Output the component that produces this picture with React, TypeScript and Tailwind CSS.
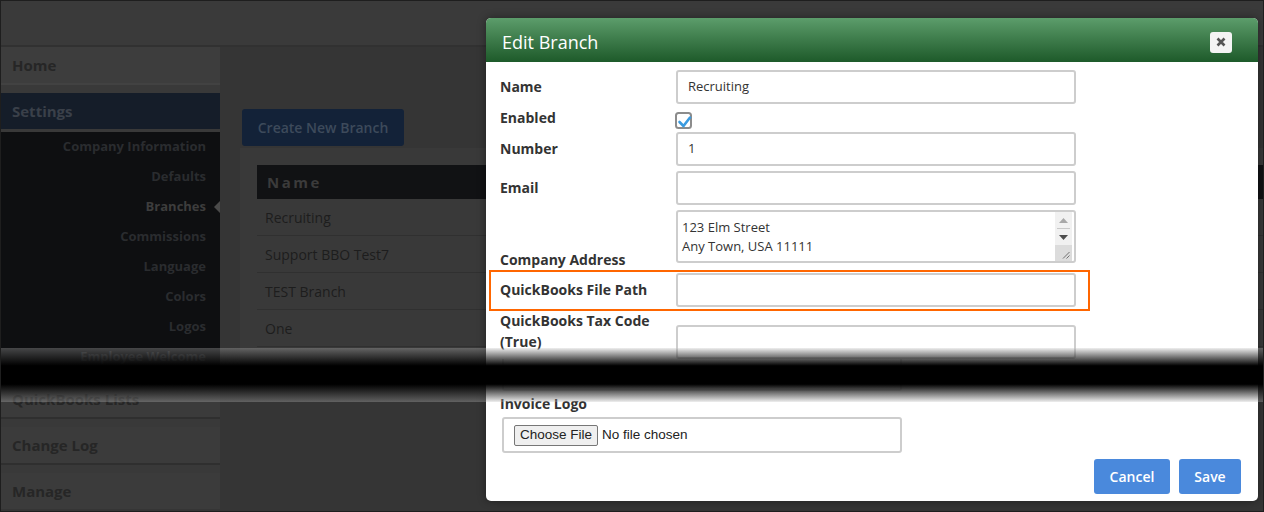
import React from 'react';

const subItems = [
  'Company Information',
  'Defaults',
  'Branches',
  'Commissions',
  'Language',
  'Colors',
  'Logos',
  'Employee Welcome',
];

const branches = ['Recruiting', 'Support BBO Test7', 'TEST Branch', 'One'];

function Sidebar() {
  return (
    <div className="w-[219px] shrink-0 bg-[#393939] flex flex-col">
      <div className="h-[36px] flex items-center pl-[11px] bg-[#3d3d3d] text-[15px] font-bold text-[#262626]">Home</div>
      <div className="h-[10px] border-t-2 border-[#424242]" />
      <div className="h-[36px] flex items-center pl-[11px] bg-[#151d29] text-[15px] font-bold text-[#3a4049]">Settings</div>
      <div className="mt-[3px] bg-[#0e0f11] pb-[9px]">
        {subItems.map((item) => (
          <div key={item} className="h-[30px] flex items-center justify-end">
            <span
              className={`text-[13px] font-bold ${item === 'Branches' ? 'text-[#3d3d3d]' : 'text-[#2a2c2f]'}`}
            >
              {item}
            </span>
            <span className="w-[14px] flex justify-end">
              {item === 'Branches' && (
                <span className="w-0 h-0 border-y-[6px] border-y-transparent border-r-[6px] border-r-[#4a4a4a]" />
              )}
            </span>
          </div>
        ))}
      </div>
      {['QuickBooks Lists', 'Change Log', 'Manage'].map((item, i) => (
        <div key={item}>
          {i > 0 && <div className="h-[10px] border-t-2 border-[#2f2f2f]" />}
          <div className="h-[36px] flex items-center pl-[11px] bg-[#3b3b3b] text-[15px] font-bold text-[#262626]">
            {item}
          </div>
        </div>
      ))}
    </div>
  );
}

function MainArea() {
  return (
    <div className="flex-1 bg-[#353535] pl-[22px] pt-[62px]">
      <button className="h-[37px] w-[162px] rounded-[3px] bg-[#132238] text-[14px] font-semibold text-[#3d4a5b]">
        Create New Branch
      </button>
      <div className="mt-[2px] -ml-[2px] h-[217px] bg-[#393939] pl-[17px] pt-[17px]">
        <div className="h-[34px] bg-[#111214] flex items-center pl-[10px] text-[15px] font-bold tracking-[2.5px] text-[#3b3b3b]">
          Name
        </div>
        {branches.map((b) => (
          <div key={b} className="h-[37px] flex items-center pl-[8px] border-b border-[#303030] text-[14px] text-[#1d1d1d]">
            {b}
          </div>
        ))}
      </div>
    </div>
  );
}

function TextInput({ value = '' }: { value?: string }) {
  return (
    <div className="w-[400px] h-[34px] border-2 border-[#cdcdcd] rounded-[3px] flex items-center pl-[10px] text-[13px] text-[#333]">
      {value}
    </div>
  );
}

function Label({ children, className = '' }: { children: React.ReactNode; className?: string }) {
  return <div className={`w-[176px] shrink-0 text-[14px] font-bold text-[#333] leading-[20px] ${className}`}>{children}</div>;
}

function AddressBox() {
  return (
    <div className="w-[400px] h-[53px] border-2 border-[#cdcdcd] rounded-[3px] flex">
      <div className="flex-1 pl-[4px] pt-[6px] text-[13px] leading-[19px] text-[#333]">
        <div>123 Elm Street</div>
        <div>Any Town, USA 11111</div>
      </div>
      <div className="w-[17px] mr-[2px] bg-[#f1f1f1] flex flex-col">
        <div className="h-[16px] flex items-center justify-center">
          <svg width="9" height="5" viewBox="0 0 9 5">
            <path d="M0 5 L4.5 0 L9 5 Z" fill="#a8a8a8" />
          </svg>
        </div>
        <div className="h-px mx-[2px] bg-[#c8c8c8]" />
        <div className="h-[16px] flex items-center justify-center">
          <svg width="9" height="5" viewBox="0 0 9 5">
            <path d="M0 0 L9 0 L4.5 5 Z" fill="#4d4d4d" />
          </svg>
        </div>
        <div className="flex-1 bg-[#dcdcdc] flex items-end justify-end pr-[2px] pb-[2px]">
          <svg width="8" height="8" viewBox="0 0 8 8">
            <path d="M1 7.5 L7.5 1 M4.5 7.5 L7.5 4.5" stroke="#707070" strokeWidth="1" />
          </svg>
        </div>
      </div>
    </div>
  );
}

function Modal() {
  return (
    <div className="absolute left-[485px] top-[17px] w-[772px] rounded-[5px] bg-white overflow-hidden shadow-[0_0_8px_rgba(0,0,0,0.4)]">
      <div className="h-[44px] bg-gradient-to-b from-[#5c9d6b] to-[#1d5a2a] flex items-center justify-between pt-[4px] pl-[16px] pr-[26px]">
        <span className="text-[18px] text-white">Edit Branch</span>
        <button className="w-[22px] h-[21px] rounded-[3px] bg-[#f4f4f4] flex items-center justify-center">
          <svg width="10" height="10" viewBox="0 0 10 10">
            <path d="M1.5 1.5 L8.5 8.5 M8.5 1.5 L1.5 8.5" stroke="#555" strokeWidth="2.6" />
          </svg>
        </button>
      </div>

      <div className="pl-[14px] pr-[14px] pb-[7px]">
        <div className="mt-[8px] flex items-center">
          <Label>Name</Label>
          <TextInput value="Recruiting" />
        </div>
        <div className="h-[28px] flex items-start">
          <Label className="pt-[4px]">Enabled</Label>
          <svg className="mt-[8px] -ml-[1px]" width="17" height="17" viewBox="0 0 17 17">
            <rect x="1" y="1" width="15" height="15" rx="2.5" fill="white" stroke="#8c8c8c" strokeWidth="2" />
            <path d="M4.5 10 L8.5 14 L15 5.5" fill="none" stroke="#3a9be0" strokeWidth="2.6" strokeLinecap="round" strokeLinejoin="round" />
          </svg>
        </div>
        <div className="flex items-center">
          <Label>Number</Label>
          <TextInput value="1" />
        </div>
        <div className="mt-[5px] flex items-center">
          <Label>Email</Label>
          <TextInput />
        </div>
        <div className="mt-[5px] h-[60px] flex items-start">
          <Label className="self-end">Company Address</Label>
          <AddressBox />
        </div>
        <div className="relative mt-[3px] w-[576px] flex items-center">
          <Label>QuickBooks File Path</Label>
          <TextInput />
          {/* highlight annotation */}
          <div className="absolute -left-[11px] -right-[14px] -top-[3px] -bottom-[4px] border-[2.5px] border-[#ff6600]" />
        </div>
        <div className="mt-[3px] flex items-start">
          <Label className="leading-[21px]">
            QuickBooks Tax Code
            <br />
            (True)
          </Label>
          <div className="mt-[15px]">
            <TextInput />
          </div>
        </div>
        <div className="ml-[2px] w-[400px] h-[32px] border-2 border-t-0 border-[#e2e2e2] rounded-b-[3px]" />
        <Label className="mt-[3px]">Invoice Logo</Label>
        <div className="mt-[3px] ml-[2px] w-[400px] h-[36px] border-2 border-[#cdcdcd] rounded-[3px] flex items-center pl-[10px] font-['Liberation_Sans',Arial,sans-serif] text-[13.5px] text-[#222]">
          <span className="h-[21px] px-[5px] flex items-center bg-[#efefef] border border-[#767676] rounded-[2px]">
            Choose File
          </span>
          <span className="ml-[4px]">No file chosen</span>
        </div>
        <div className="mt-[6px] mr-[3px] flex justify-end gap-[9px]">
          <button className="h-[35px] w-[76px] rounded-[3px] bg-[#4a89dc] text-[14px] font-semibold text-white">Cancel</button>
          <button className="h-[35px] w-[62px] rounded-[3px] bg-[#4a89dc] text-[14px] font-semibold text-white">Save</button>
        </div>
      </div>
    </div>
  );
}

export default function App() {
  return (
    <div className="relative w-[1264px] h-[512px] overflow-hidden border border-[#1e1e1e] bg-[#353535] font-['Open_Sans',sans-serif]">
      <div className="h-[46px] bg-[#3a3a3a] border-b-2 border-[#313131]" />
      <div className="flex">
        <Sidebar />
        <MainArea />
      </div>
      <Modal />
      {/* torn edge */}
      <div className="absolute left-0 right-0 top-[347px] h-[54px] bg-[linear-gradient(to_bottom,rgba(200,200,200,0.3)_0%,#000_33%,#000_67%,rgba(200,200,200,0.3)_100%)]" />
    </div>
  );
}
